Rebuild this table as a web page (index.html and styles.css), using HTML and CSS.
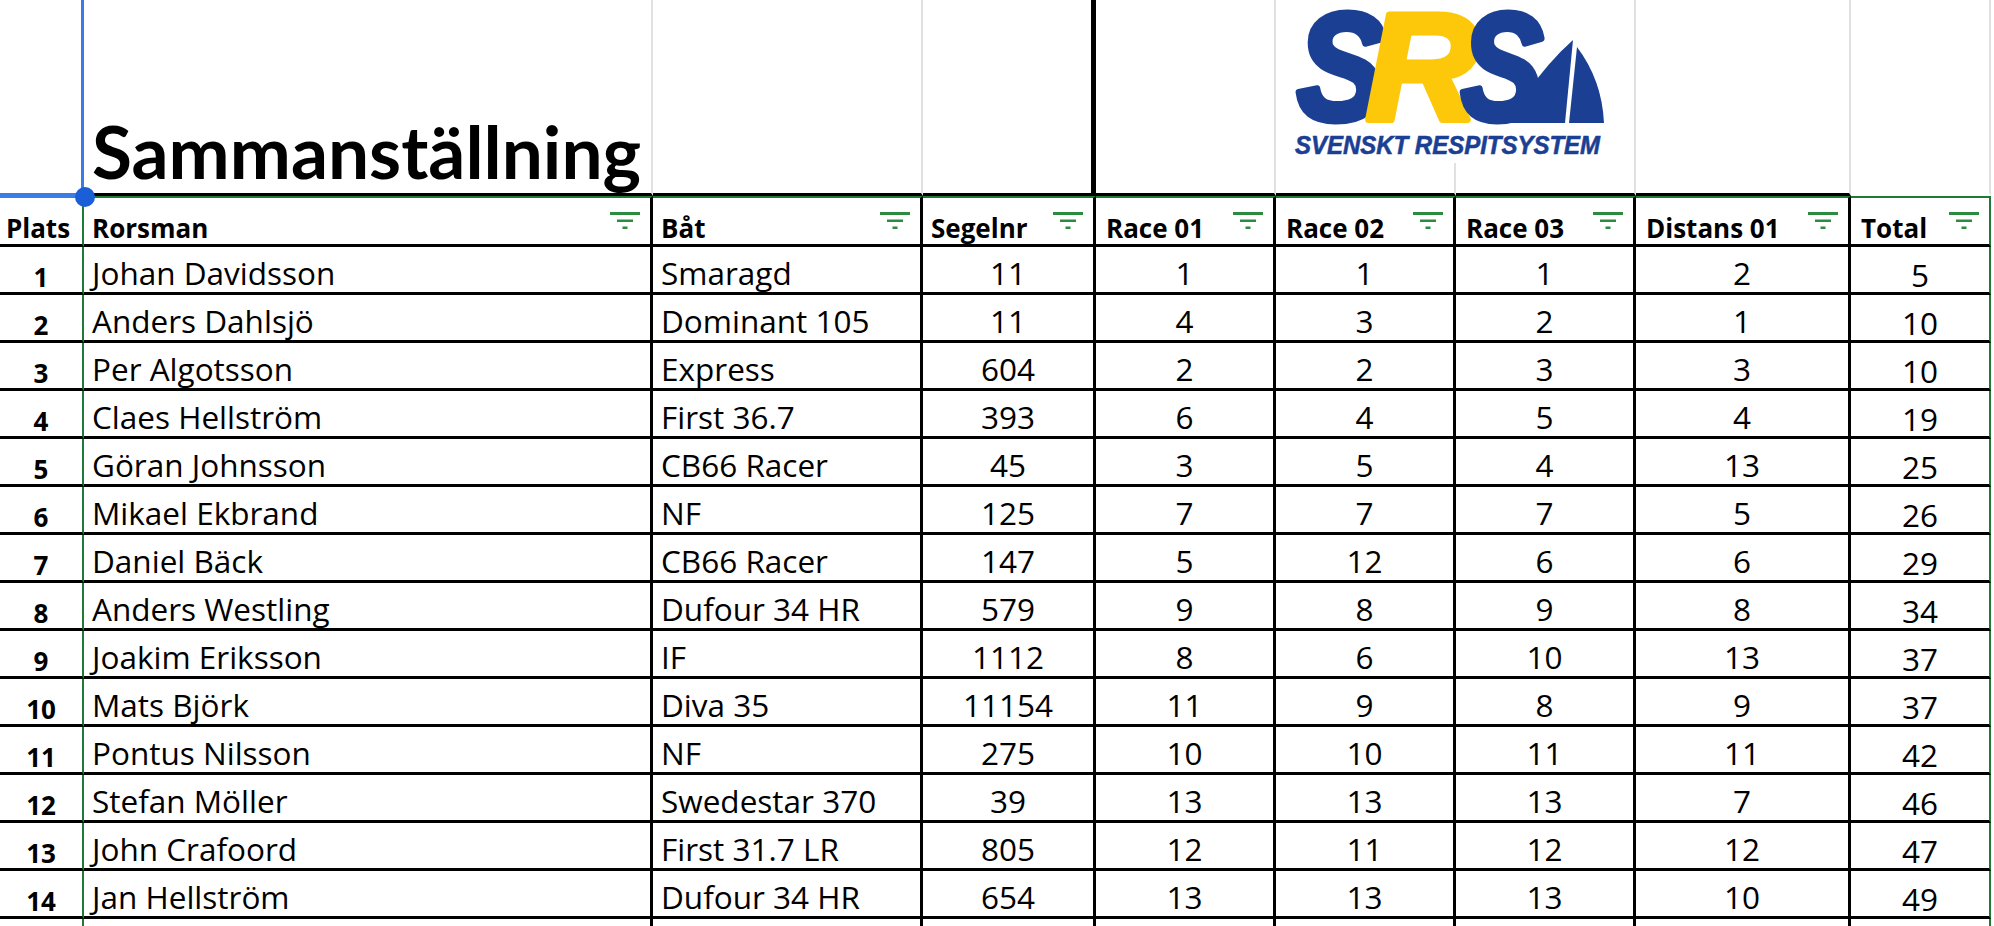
FILE: index.html
```html
<!DOCTYPE html>
<html lang="sv">
<head>
<meta charset="utf-8">
<title>Sammanställning</title>
<link rel="stylesheet" href="styles.css">
</head>
<body>
<div class="sheet">
  <div class="row toprow">
    <div class="c top first"></div>
    <div class="c top titlecell"><h1 class="title">Sammanställning</h1></div>
    <div class="c top"></div>
    <div class="c top split"></div>
    <div class="c top"></div>
    <div class="c top"></div>
    <div class="c top"></div>
    <div class="c top"></div>
    <div class="c top last"></div>
  </div>
  <div class="row head">
    <div class="c hd first">Plats</div>
    <div class="c hd"><span>Rorsman</span><svg class="filt" viewBox="0 0 30 17"><rect x="0" y="0" width="30" height="3"/><rect x="7" y="7.5" width="16" height="2.5"/><rect x="12.5" y="14.5" width="5" height="2.5"/></svg></div>
    <div class="c hd"><span>Båt</span><svg class="filt" viewBox="0 0 30 17"><rect x="0" y="0" width="30" height="3"/><rect x="7" y="7.5" width="16" height="2.5"/><rect x="12.5" y="14.5" width="5" height="2.5"/></svg></div>
    <div class="c hd"><span>Segelnr</span><svg class="filt" viewBox="0 0 30 17"><rect x="0" y="0" width="30" height="3"/><rect x="7" y="7.5" width="16" height="2.5"/><rect x="12.5" y="14.5" width="5" height="2.5"/></svg></div>
    <div class="c hd wide"><span>Race 01</span><svg class="filt" viewBox="0 0 30 17"><rect x="0" y="0" width="30" height="3"/><rect x="7" y="7.5" width="16" height="2.5"/><rect x="12.5" y="14.5" width="5" height="2.5"/></svg></div>
    <div class="c hd wide"><span>Race 02</span><svg class="filt" viewBox="0 0 30 17"><rect x="0" y="0" width="30" height="3"/><rect x="7" y="7.5" width="16" height="2.5"/><rect x="12.5" y="14.5" width="5" height="2.5"/></svg></div>
    <div class="c hd wide"><span>Race 03</span><svg class="filt" viewBox="0 0 30 17"><rect x="0" y="0" width="30" height="3"/><rect x="7" y="7.5" width="16" height="2.5"/><rect x="12.5" y="14.5" width="5" height="2.5"/></svg></div>
    <div class="c hd wide"><span>Distans 01</span><svg class="filt" viewBox="0 0 30 17"><rect x="0" y="0" width="30" height="3"/><rect x="7" y="7.5" width="16" height="2.5"/><rect x="12.5" y="14.5" width="5" height="2.5"/></svg></div>
    <div class="c hd wide last"><span>Total</span><svg class="filt" viewBox="0 0 30 17"><rect x="0" y="0" width="30" height="3"/><rect x="7" y="7.5" width="16" height="2.5"/><rect x="12.5" y="14.5" width="5" height="2.5"/></svg></div>
  </div>

  <div class="row"><div class="c d first">1</div><div class="c d">Johan Davidsson</div><div class="c d">Smaragd</div><div class="c d num">11</div><div class="c d num">1</div><div class="c d num">1</div><div class="c d num">1</div><div class="c d num">2</div><div class="c d num last">5</div></div>
  <div class="row"><div class="c d first">2</div><div class="c d">Anders Dahlsjö</div><div class="c d">Dominant 105</div><div class="c d num">11</div><div class="c d num">4</div><div class="c d num">3</div><div class="c d num">2</div><div class="c d num">1</div><div class="c d num last">10</div></div>
  <div class="row"><div class="c d first">3</div><div class="c d">Per Algotsson</div><div class="c d">Express</div><div class="c d num">604</div><div class="c d num">2</div><div class="c d num">2</div><div class="c d num">3</div><div class="c d num">3</div><div class="c d num last">10</div></div>
  <div class="row"><div class="c d first">4</div><div class="c d">Claes Hellström</div><div class="c d">First 36.7</div><div class="c d num">393</div><div class="c d num">6</div><div class="c d num">4</div><div class="c d num">5</div><div class="c d num">4</div><div class="c d num last">19</div></div>
  <div class="row"><div class="c d first">5</div><div class="c d">Göran Johnsson</div><div class="c d">CB66 Racer</div><div class="c d num">45</div><div class="c d num">3</div><div class="c d num">5</div><div class="c d num">4</div><div class="c d num">13</div><div class="c d num last">25</div></div>
  <div class="row"><div class="c d first">6</div><div class="c d">Mikael Ekbrand</div><div class="c d">NF</div><div class="c d num">125</div><div class="c d num">7</div><div class="c d num">7</div><div class="c d num">7</div><div class="c d num">5</div><div class="c d num last">26</div></div>
  <div class="row"><div class="c d first">7</div><div class="c d">Daniel Bäck</div><div class="c d">CB66 Racer</div><div class="c d num">147</div><div class="c d num">5</div><div class="c d num">12</div><div class="c d num">6</div><div class="c d num">6</div><div class="c d num last">29</div></div>
  <div class="row"><div class="c d first">8</div><div class="c d">Anders Westling</div><div class="c d">Dufour 34 HR</div><div class="c d num">579</div><div class="c d num">9</div><div class="c d num">8</div><div class="c d num">9</div><div class="c d num">8</div><div class="c d num last">34</div></div>
  <div class="row"><div class="c d first">9</div><div class="c d">Joakim Eriksson</div><div class="c d">IF</div><div class="c d num">1112</div><div class="c d num">8</div><div class="c d num">6</div><div class="c d num">10</div><div class="c d num">13</div><div class="c d num last">37</div></div>
  <div class="row"><div class="c d first">10</div><div class="c d">Mats Björk</div><div class="c d">Diva 35</div><div class="c d num">11154</div><div class="c d num">11</div><div class="c d num">9</div><div class="c d num">8</div><div class="c d num">9</div><div class="c d num last">37</div></div>
  <div class="row"><div class="c d first">11</div><div class="c d">Pontus Nilsson</div><div class="c d">NF</div><div class="c d num">275</div><div class="c d num">10</div><div class="c d num">10</div><div class="c d num">11</div><div class="c d num">11</div><div class="c d num last">42</div></div>
  <div class="row"><div class="c d first">12</div><div class="c d">Stefan Möller</div><div class="c d">Swedestar 370</div><div class="c d num">39</div><div class="c d num">13</div><div class="c d num">13</div><div class="c d num">13</div><div class="c d num">7</div><div class="c d num last">46</div></div>
  <div class="row"><div class="c d first">13</div><div class="c d">John Crafoord</div><div class="c d">First 31.7 LR</div><div class="c d num">805</div><div class="c d num">12</div><div class="c d num">11</div><div class="c d num">12</div><div class="c d num">12</div><div class="c d num last">47</div></div>
  <div class="row"><div class="c d first">14</div><div class="c d">Jan Hellström</div><div class="c d">Dufour 34 HR</div><div class="c d num">654</div><div class="c d num">13</div><div class="c d num">13</div><div class="c d num">13</div><div class="c d num">10</div><div class="c d num last">49</div></div>
  <div class="row"><div class="c d first"></div><div class="c d"></div><div class="c d"></div><div class="c d num"></div><div class="c d num"></div><div class="c d num"></div><div class="c d num"></div><div class="c d num"></div><div class="c d num last"></div></div>

  <div class="handle"></div>

  <svg class="logo" viewBox="0 0 336 163" aria-label="SRS Svenskt Respitsystem">
    <path class="sail" d="M289,40 Q255,70 223,123 L281,123 Z"/>
    <path class="sail" d="M293,47 Q318,80 320,123 L285,123 Z"/>
    <text class="big blue" x="13" y="119.5" textLength="88" lengthAdjust="spacingAndGlyphs">S</text>
    <text class="big yellow" x="82" y="119.5" textLength="112" lengthAdjust="spacingAndGlyphs">R</text>
    <text class="big blue outl" x="177" y="119.5" textLength="82" lengthAdjust="spacingAndGlyphs">S</text>
    <text class="tag" x="11" y="154" textLength="305" lengthAdjust="spacingAndGlyphs">SVENSKT RESPITSYSTEM</text>
  </svg>
</div>
</body>
</html>
```

FILE: styles.css
```css
html, body {
  margin: 0;
  padding: 0;
  background: #ffffff;
}

.sheet {
  position: relative;
  width: 1994px;
  height: 926px;
  overflow: hidden;
  display: flex;
  flex-direction: column;
  color: #000;
  font-family: "Open Sans", "Noto Sans", sans-serif;
}

.row {
  display: grid;
  grid-template-columns: 84px 569px 270px 173px 180px 180px 180px 215px 140px;
  height: 48px;
  flex: none;
}

.row.toprow { height: 196px; }
.row.head { height: 51px; }

.c {
  box-sizing: border-box;
  border-right: 3px solid #000;
  border-bottom: 3px solid #000;
  display: flex;
  align-items: flex-end;
  min-width: 0;
  overflow: hidden;
  white-space: nowrap;
}

.c.first { border-right: 2px solid #1f7a3a; }
.c.last { border-right: 2px solid #1f7a3a; }

/* top area (above the table) */
.top {
  border-right: 2px solid #e1e1e1;
  border-bottom: 3px solid #000;
  overflow: visible;
}
.top.first {
  border-right: 3px solid #3b7de8;
  border-bottom: 3px solid #3b7de8;
}
.top.split { border-right: 5px solid #000; }
.top.last {
  border-right: 2px solid #e1e1e1;
  border-bottom: 3px solid transparent;
}

.title {
  margin: 0;
  padding: 0 0 5px 8px;
  font-family: "Lato", "Open Sans", sans-serif;
  font-weight: 700;
  font-size: 73px;
  line-height: 1;
  color: #000;
}

/* header row */
.hd {
  border-top: 2px solid #1f7a3a;
  font-weight: 700;
  font-size: 26px;
  line-height: 1;
  padding: 0 10px 3px 8px;
}
.hd.wide { padding-left: 10px; }
.hd.first {
  border-top: 2px solid #3b7de8;
  justify-content: center;
  padding: 0 6px 3px 0;
}

.filt {
  flex: none;
  width: 30px;
  height: 17px;
  margin-left: auto;
  align-self: flex-start;
  margin-top: 14px;
  fill: #2b8c3f;
}

/* body cells */
.d {
  font-size: 31.5px;
  font-weight: 400;
  line-height: 1;
  padding: 0 8px 4px 8px;
}
.d.num { justify-content: center; }
.d.first {
  font-size: 26px;
  font-weight: 700;
  justify-content: center;
  padding: 0 0 2.5px 0;
}
.d.last { padding-bottom: 2px; }

/* selection handle */
.handle {
  position: absolute;
  left: 75px;
  top: 187px;
  width: 20px;
  height: 20px;
  border-radius: 50%;
  background: #1a5fd8;
}

/* floating logo image */
.logo {
  position: absolute;
  left: 1284px;
  top: 0;
  width: 336px;
  height: 163px;
  background: #ffffff;
}
.logo .sail { fill: #1b3f93; }
.logo .big {
  font-family: "Liberation Sans", Arial, sans-serif;
  font-weight: 700;
  font-style: italic;
  font-size: 152px;
  stroke-width: 7px;
  stroke-linejoin: round;
}
.logo .blue { fill: #1b3f93; stroke: #1b3f93; }
.logo .yellow { fill: #fdc80a; stroke: #fdc80a; }
.logo .outl {
  stroke: #1b3f93;
}
.logo .tag {
  font-family: "Liberation Sans", Arial, sans-serif;
  font-weight: 700;
  font-style: italic;
  font-size: 26.5px;
  fill: #1b3f93;
  stroke: #1b3f93;
  stroke-width: 0.6px;
}
```
